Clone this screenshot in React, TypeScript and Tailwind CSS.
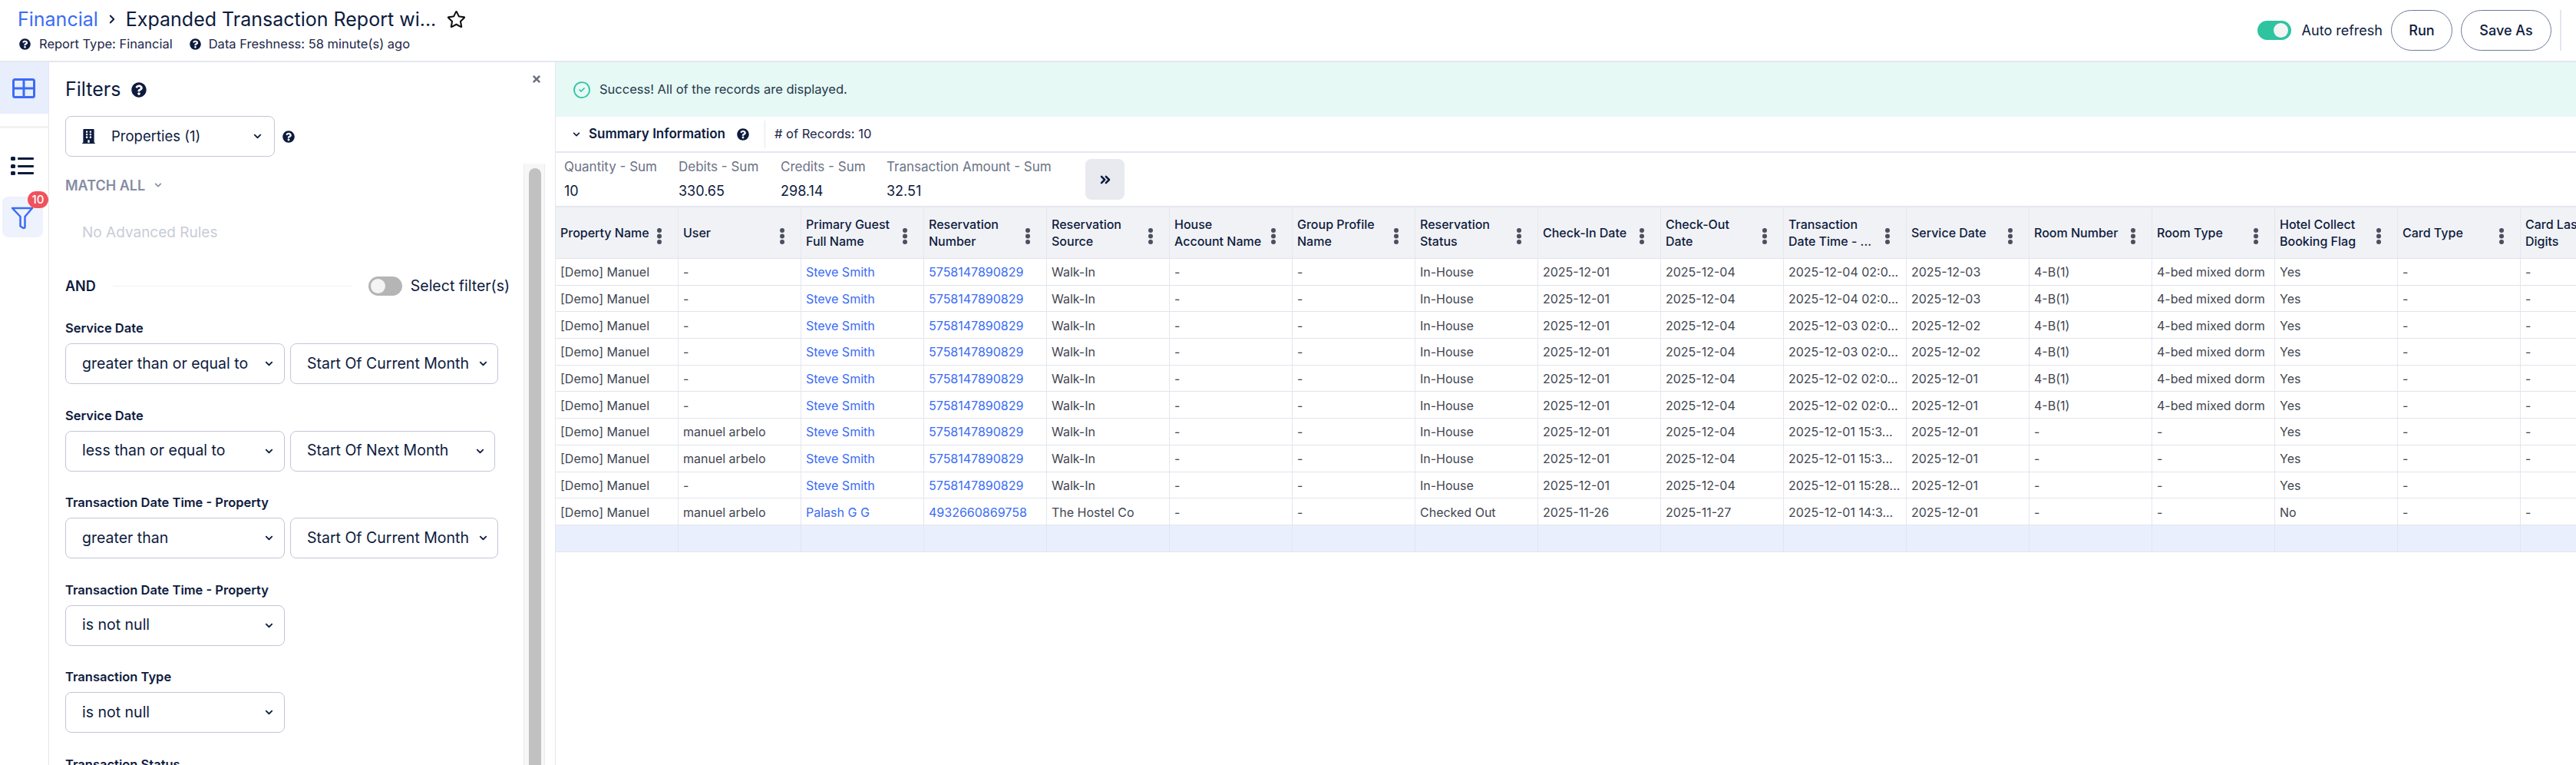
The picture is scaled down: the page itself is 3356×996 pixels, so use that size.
import React from "react";
import { FaQuestionCircle, FaBuilding, FaChevronDown, FaTimes, FaRegStar } from "react-icons/fa";
import { ChevronRight, ChevronsRight, CircleCheck } from "lucide-react";

const columns = [
  "Property Name",
  "User",
  "Primary Guest Full Name",
  "Reservation Number",
  "Reservation Source",
  "House\nAccount Name",
  "Group Profile Name",
  "Reservation Status",
  "Check-In Date",
  "Check-Out Date",
  "Transaction Date Time - ...",
  "Service Date",
  "Room Number",
  "Room Type",
  "Hotel Collect Booking Flag",
  "Card Type",
  "Card Last 4 Digits",
];

const guest = ["Steve Smith", "5758147890829", "Walk-In", "-", "-", "In-House", "2025-12-01", "2025-12-04"];
const dorm = ["4-B(1)", "4-bed mixed dorm", "Yes", "-", "-"];
const none = ["-", "-", "Yes", "-", "-"];

const rows = [
  ["[Demo] Manuel", "-", ...guest, "2025-12-04 02:0...", "2025-12-03", ...dorm],
  ["[Demo] Manuel", "-", ...guest, "2025-12-04 02:0...", "2025-12-03", ...dorm],
  ["[Demo] Manuel", "-", ...guest, "2025-12-03 02:0...", "2025-12-02", ...dorm],
  ["[Demo] Manuel", "-", ...guest, "2025-12-03 02:0...", "2025-12-02", ...dorm],
  ["[Demo] Manuel", "-", ...guest, "2025-12-02 02:0...", "2025-12-01", ...dorm],
  ["[Demo] Manuel", "-", ...guest, "2025-12-02 02:0...", "2025-12-01", ...dorm],
  ["[Demo] Manuel", "manuel arbelo", ...guest, "2025-12-01 15:3...", "2025-12-01", ...none],
  ["[Demo] Manuel", "manuel arbelo", ...guest, "2025-12-01 15:3...", "2025-12-01", ...none],
  ["[Demo] Manuel", "-", ...guest, "2025-12-01 15:28...", "2025-12-01", "-", "-", "Yes", "-", ""],
  ["[Demo] Manuel", "manuel arbelo", "Palash G G", "4932660869758", "The Hostel Co", "-", "-", "Checked Out", "2025-11-26", "2025-11-27", "2025-12-01 14:3...", "2025-12-01", "-", "-", "No", "-", "-"],
];

const stats = [
  { label: "Quantity - Sum", value: "10", width: "w-[149px]" },
  { label: "Debits - Sum", value: "330.65", width: "w-[133px]" },
  { label: "Credits - Sum", value: "298.14", width: "w-[138px]" },
  { label: "Transaction Amount - Sum", value: "32.51", width: "w-[259px]" },
];

const filters = [
  { label: "Service Date", op: "greater than or equal to", value: "Start Of Current Month", valueWidth: "w-[271px]" },
  { label: "Service Date", op: "less than or equal to", value: "Start Of Next Month", valueWidth: "w-[267px]" },
  { label: "Transaction Date Time - Property", op: "greater than", value: "Start Of Current Month", valueWidth: "w-[271px]" },
  { label: "Transaction Date Time - Property", op: "is not null" },
  { label: "Transaction Type", op: "is not null" },
];

function Help({ className }: { className: string }) {
  return <FaQuestionCircle className={"text-[#0d1b3e] " + className} />;
}

function FilterSelect({ text, className }: { text: string; className: string }) {
  return (
    <div className={"flex h-[53px] items-center justify-between rounded-lg border border-[#c3c6d6] bg-white pl-[21px] pr-[14px] " + className}>
      <span className="text-[19.5px] whitespace-nowrap text-[#0d1b3e]">{text}</span>
      <FaChevronDown className="h-[11px] w-[11px] shrink-0 text-[#0d1b3e]" />
    </div>
  );
}

function Kebab() {
  return (
    <svg width="6" height="21" viewBox="0 0 6 21" className="mt-2 shrink-0 fill-[#4b5060]">
      <circle cx="3" cy="3" r="3" />
      <circle cx="3" cy="10.5" r="3" />
      <circle cx="3" cy="18" r="3" />
    </svg>
  );
}

function Toggle({ on }: { on: boolean }) {
  return on ? (
    <div className="flex h-[25px] w-[44px] items-center justify-end rounded-full bg-[#2ec4a0] px-[4px]">
      <div className="h-[19px] w-[19px] rounded-full bg-[#f4f4f4]" />
    </div>
  ) : (
    <div className="flex h-[25px] w-[44px] items-center rounded-full bg-[#b5b5b5] px-[3px]">
      <div className="h-[19px] w-[19px] rounded-full bg-[#f4f4f4]" />
    </div>
  );
}

export default function App() {
  return (
    <div className="flex h-[996px] w-[3356px] flex-col overflow-hidden bg-white font-['Inter',sans-serif] text-[#0d1b3e]">
      {/* Header */}
      <header className="flex h-[81px] shrink-0 items-center justify-between border-b-2 border-[#e5e7ef] pl-[23px] pr-[19px]">
        <div>
          <div className="flex h-[30px] items-center pt-[2px] text-[25px] leading-none">
            <span className="text-[#3b6cf6]">Financial</span>
            <ChevronRight className="ml-[9px] mr-[9px] h-[20px] w-[18px]" strokeWidth={2.5} />
            <span>Expanded Transaction Report wi...</span>
            <FaRegStar className="ml-[14px] h-[24px] w-[25px] text-[#111]" />
          </div>
          <div className="mt-[6px] flex items-center text-[16.5px] text-[#1c2747]">
            <Help className="ml-[2px] h-[15px] w-[15px]" />
            <span className="ml-[11px]">Report Type: Financial</span>
            <Help className="ml-[22px] h-[15px] w-[15px]" />
            <span className="ml-[10px]">Data Freshness: 58 minute(s) ago</span>
          </div>
        </div>
        <div className="flex items-center">
          <Toggle on />
          <span className="ml-[14px] text-[18px]">Auto refresh</span>
          <div className="ml-[11px] flex h-[53px] w-[80px] items-center justify-center rounded-full border border-[#6f7a99] text-[18px] font-medium">Run</div>
          <div className="ml-[11px] flex h-[53px] w-[118px] items-center justify-center rounded-full border border-[#6f7a99] text-[18px] font-medium">Save As</div>
          <div className="ml-[11px] h-[53px] w-[2px] bg-[#e5e7ef]" />
        </div>
      </header>

      <div className="flex min-h-0 flex-1">
        {/* Icon rail */}
        <nav className="flex w-[64px] shrink-0 flex-col border-r border-[#e5e7ef]">
          <div className="flex h-[67px] items-center justify-center bg-[#e9eefd] pr-[2px]">
            <svg width="30" height="26" viewBox="0 0 30 26" fill="none" stroke="#3b6cf6" strokeWidth="3">
              <rect x="1.5" y="1.5" width="27" height="23" rx="2" />
              <path d="M15 1.5v23M1.5 13h27" />
            </svg>
          </div>
          <div className="mt-[16px] h-[3px] bg-[#f3f3f5]" />
          <div className="ml-[14px] mt-[37px]">
            <svg width="30" height="24" viewBox="0 0 30 24" fill="#0d1b3e">
              <rect x="0" y="0" width="6" height="5" rx="1.5" />
              <rect x="0" y="10" width="6" height="5" rx="1.5" />
              <rect x="0" y="19" width="6" height="5" rx="1.5" />
              <rect x="9" y="1" width="21" height="3" rx="1" />
              <rect x="9" y="11" width="21" height="3" rx="1" />
              <rect x="9" y="20" width="21" height="3" rx="1" />
            </svg>
          </div>
          <div className="relative ml-[3px] mt-[28px] flex h-[53px] w-[53px] items-center justify-center rounded-lg bg-[#eef2fc]">
            <svg width="30" height="30" viewBox="0 0 30 30" fill="none" stroke="#3b6cf6" strokeWidth="2.5" strokeLinejoin="round" className="mr-[2px] mt-[3px]">
              <path d="M2 2h26L18.5 13v13.5c0 1.5-1.5 2-3 1l-3-2V13z" />
            </svg>
            <span className="absolute -top-[7px] left-[33px] flex h-[22px] w-[27px] items-center justify-center rounded-full bg-[#f0525c] text-[15px] font-medium text-white">10</span>
          </div>
        </nav>

        {/* Filters */}
        <aside className="relative flex w-[659px] shrink-0 flex-col">
          <FaTimes className="absolute right-[17px] top-[15px] h-[14px] w-[14px] text-[#6b7280]" />
          <div className="flex h-[70px] shrink-0 items-center pl-[21px] pt-[1px]">
            <span className="text-[25px]">Filters</span>
            <Help className="ml-[14px] h-[20px] w-[20px]" />
          </div>
          <div className="flex items-center pl-[21px]">
            <div className="flex h-[53px] w-[273px] items-center rounded-lg border border-[#c3c6d6] pl-[21px] pr-[16px]">
              <FaBuilding className="h-[19px] w-[17px]" />
              <span className="ml-[21px] flex-1 text-[18.5px]">Properties (1)</span>
              <FaChevronDown className="h-[11px] w-[11px]" />
            </div>
            <Help className="ml-[10px] h-[16px] w-[16px]" />
          </div>
          <div className="mt-[9px] flex min-h-0 flex-1">
            <div className="min-w-0 flex-1 overflow-hidden pl-[21px]">
              <div className="mt-[18px] flex h-[20px] items-center text-[18px] font-semibold text-[#858ca3]">
                MATCH ALL
                <FaChevronDown className="ml-[12px] h-[10px] w-[10px]" />
              </div>
              <div className="ml-[22px] mt-[42px] h-[20px] text-[19px] leading-[20px] text-[#c9ccd6]">No Advanced Rules</div>
              <div className="mt-[47px] flex h-[25px] items-center">
                <span className="text-[18px] font-semibold">AND</span>
                <div className="ml-[22px] h-px w-[312px] bg-[#f0f0f2]" />
                <div className="ml-[21px]"><Toggle on={false} /></div>
                <span className="ml-[11px] whitespace-nowrap text-[19.5px]">Select filter(s)</span>
              </div>
              <div className="mt-[32px] flex flex-col gap-[30.5px]">
                {filters.map((f, i) => (
                  <div key={i}>
                    <div className="mb-[10px] h-[20px] text-[16.5px] font-semibold leading-[20px]">{f.label}</div>
                    <div className="flex gap-[7px]">
                      <FilterSelect text={f.op} className="w-[286px]" />
                      {f.value && <FilterSelect text={f.value} className={f.valueWidth + " !pl-[21px] !pr-[13px]"} />}
                    </div>
                  </div>
                ))}
                <div className="h-[20px] text-[16.5px] font-semibold leading-[20px]">Transaction Status</div>
              </div>
            </div>
            <div className="mr-[13px] w-[28px] shrink-0 border-x border-[#ececec] bg-[#f7f7f7] pl-[6px] pt-[6px]">
              <div className="h-full w-[16px] rounded-t-full bg-[#c1c1c1]" />
            </div>
          </div>
        </aside>

        {/* Results */}
        <main className="flex min-w-0 flex-1 flex-col border-l border-[#e5e7ef]">
          <div className="flex h-[71px] shrink-0 items-center bg-[#e6f9f5] pl-[22px]">
            <CircleCheck className="h-[24px] w-[24px] text-[#2ec4a0]" strokeWidth={1.75} />
            <span className="ml-[11px] text-[16.5px] text-[#24384a]">Success! All of the records are displayed.</span>
          </div>
          <div className="flex h-[47px] shrink-0 items-center border-b-2 border-[#e5e7ef] pl-[22px]">
            <FaChevronDown className="h-[10px] w-[10px]" />
            <span className="ml-[11px] text-[17px] font-semibold">Summary Information</span>
            <Help className="ml-[15px] h-[16px] w-[16px]" />
            <div className="ml-[20px] h-[36px] w-px bg-[#e5e7ef]" />
            <span className="ml-[12px] text-[16.5px] text-[#1c2747]">
              # of Records: 10
            </span>
          </div>
          <div className="flex h-[69px] shrink-0 items-center pl-[11px]">
            {stats.map((s) => (
              <div key={s.label} className={s.width + " shrink-0"}>
                <div className="whitespace-nowrap text-[17px] text-[#6b7285]">{s.label}</div>
                <div className="mt-[4px] text-[18px]">{s.value}</div>
              </div>
            ))}
            <div className="flex h-[53px] w-[51px] shrink-0 items-center justify-center rounded-lg bg-[#e8eaf0]">
              <ChevronsRight className="h-[20px] w-[20px]" strokeWidth={3} />
            </div>
          </div>

          <div className="min-w-0 overflow-hidden border-t-2 border-[#e5e7ef]">
            <div className="flex h-[67px] w-max border-b border-[#e2e4ea] bg-[#f1f2f5]">
              {columns.map((c) => (
                <div key={c} className="flex w-[160px] shrink-0 items-center justify-between border-r border-[#e5e7ef] pl-[6px] pr-[21px] text-[16px] font-medium leading-[22px]">
                  <span className="max-w-[118px] whitespace-pre-line">{c}</span>
                  <Kebab />
                </div>
              ))}
            </div>
            {rows.map((r, i) => (
              <div key={i} className="flex h-[34.7px] w-max border-b border-[#e2e4ea]">
                {r.map((v, j) => (
                  <div key={j} className={"flex w-[160px] shrink-0 items-center overflow-hidden whitespace-nowrap border-r border-[#e5e7ef] pl-[6px] pt-px text-[16px] " + (j === 2 || j === 3 ? "text-[#3b6cf6]" : "text-[#424650]")}>
                    {v}
                  </div>
                ))}
              </div>
            ))}
            <div className="flex h-[34.7px] w-max border-b border-[#e2e4ea] bg-[#e9effd]">
              {columns.map((c) => (
                <div key={c} className="w-[160px] shrink-0 border-r border-[#e1e5f0]" />
              ))}
            </div>
          </div>
        </main>
      </div>
    </div>
  );
}
